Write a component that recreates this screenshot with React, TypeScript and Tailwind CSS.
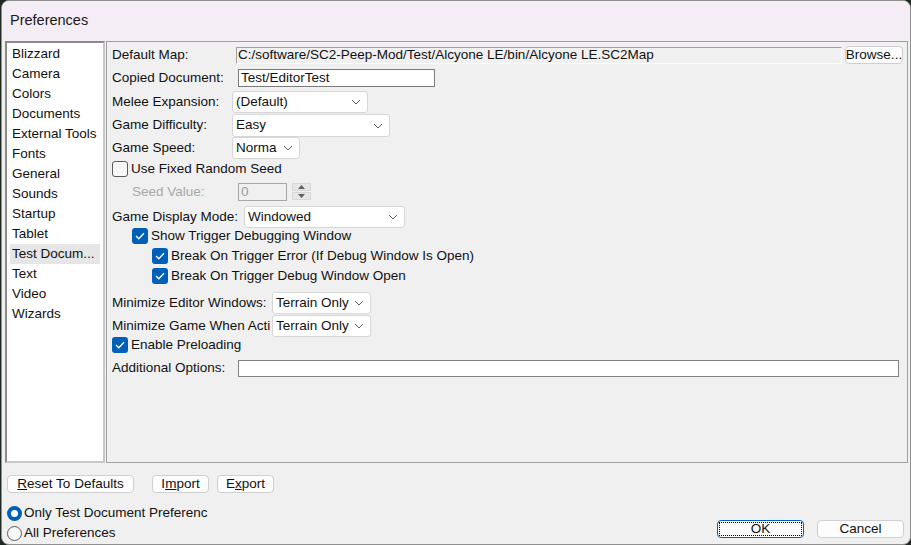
import React from 'react';

const categories = [
    'Blizzard', 'Camera', 'Colors', 'Documents', 'External Tools', 'Fonts', 'General',
    'Sounds', 'Startup', 'Tablet', 'Test Docum...', 'Text', 'Video', 'Wizards',
];

const Chevron = () => (
    <svg width="10" height="6" viewBox="0 0 10 6" className="shrink-0">
        <polyline points="1,1 5,5 9,1" fill="none" stroke="#606060" strokeWidth="1" />
    </svg>
);

const Dropdown: React.FC<{ value: string; w: string; h?: string }> = ({ value, w, h = 'h-[22px]' }) => (
    <div className={`${w} ${h} flex items-center justify-between pl-[3px] pr-[6px] bg-white border border-[#d6d6d6] rounded-[3px]`}>
        <span className="whitespace-nowrap overflow-hidden">{value}</span>
        <Chevron />
    </div>
);

const Check: React.FC<{ checked?: boolean; label: string }> = ({ checked, label }) => (
    <div className="flex items-center h-[16px] gap-[3px]">
        {checked ? (
            <div className="w-[16px] h-[16px] rounded-[3px] bg-[#005fb8] flex items-center justify-center">
                <svg width="10" height="8" viewBox="0 0 10 8">
                    <polyline points="1,4 3.8,6.8 9,1.2" fill="none" stroke="white" strokeWidth="1.3" />
                </svg>
            </div>
        ) : (
            <div className="w-[16px] h-[16px] rounded-[3px] border border-[#5a5a5a] bg-[#f7f7f7]" />
        )}
        <span className="whitespace-nowrap">{label}</span>
    </div>
);

const Radio: React.FC<{ checked?: boolean; label: string }> = ({ checked, label }) => (
    <div className="flex items-center h-[16px] gap-[2px]">
        {checked ? (
            <div className="w-[15px] h-[15px] rounded-full bg-[#005fb8] flex items-center justify-center">
                <div className="w-[7px] h-[7px] rounded-full bg-white" />
            </div>
        ) : (
            <div className="w-[15px] h-[15px] rounded-full border border-[#5a5a5a] bg-[#f7f7f7]" />
        )}
        <span className="whitespace-nowrap">{label}</span>
    </div>
);

const Btn: React.FC<{ w: string; children: React.ReactNode; focused?: boolean }> = ({ w, children, focused }) => (
    <div
        className={`${w} h-[18px] flex items-center justify-center rounded-[4px] bg-[#fdfdfd] border ${
            focused ? 'border-[#005fb8]' : 'border-[#d0d0d0]'
        }`}
    >
        {focused ? (
            <div className="w-[calc(100%-2px)] h-[14px] border border-dotted border-black flex items-center justify-center">
                {children}
            </div>
        ) : (
            children
        )}
    </div>
);

export default function App() {
    return (
        <div
            className="w-[911px] h-[545px] bg-[#1d2a22] text-[13.5px] text-[#111] overflow-hidden"
            style={{ fontFamily: '"Liberation Sans", Arial, sans-serif' }}
        >
            <div className="w-[910px] h-[545px] ml-[1px] rounded-[8px] border border-[#8f8f8f] bg-[#f0f0f0] flex flex-col overflow-hidden">
                {/* Title bar */}
                <div className="h-[39px] bg-[#f5edf5] flex items-center pl-[8px] pt-[1px] shrink-0">
                    <span className="text-[14.5px] text-[#1a1a1a]">Preferences</span>
                </div>

                {/* Main area */}
                <div className="flex h-[422px] mt-[1px] pl-[3px] pr-[2px] gap-[1px]">
                    {/* Category list */}
                    <div className="w-[100px] h-full bg-white border-2 border-t-[#8a8a8a] border-l-[#8a8a8a] border-r-[#c8c8c8] border-b-[#c8c8c8] pt-[1px] pl-[3px]">
                        {categories.map((c) => (
                            <div
                                key={c}
                                className={`h-[20px] w-[90px] flex items-center pl-[2px] whitespace-nowrap ${
                                    c === 'Test Docum...' ? 'bg-[#e6e6e6]' : ''
                                }`}
                            >
                                {c}
                            </div>
                        ))}
                    </div>

                    {/* Settings panel */}
                    <div className="flex-1 h-full border border-[#a0a0a0] pl-[5px] flex flex-col">
                        <div className="flex items-center h-[18px] mt-[4px]">
                            <span className="w-[124px] shrink-0">Default Map:</span>
                            <div className="w-[606px] h-[17px] flex items-center pl-[1px] bg-[#f0f0f0] border border-t-[#a0a0a0] border-l-[#a0a0a0] border-r-white border-b-white whitespace-nowrap overflow-hidden">
                                C:/software/SC2-Peep-Mod/Test/Alcyone LE/bin/Alcyone LE.SC2Map
                            </div>
                            <div className="ml-[3px]">
                                <Btn w="w-[58px]">Browse...</Btn>
                            </div>
                        </div>

                        <div className="flex items-center h-[18px] mt-[5px]">
                            <span className="w-[126px] shrink-0">Copied Document:</span>
                            <div className="w-[197px] h-[18px] flex items-center pl-[2px] bg-white border border-[#7a7a7a]">
                                Test/EditorTest
                            </div>
                        </div>

                        <div className="flex items-center h-[22px] mt-[4px]">
                            <span className="w-[120px] shrink-0">Melee Expansion:</span>
                            <Dropdown value="(Default)" w="w-[136px]" />
                        </div>

                        <div className="flex items-center h-[23px] mt-[1px]">
                            <span className="w-[120px] shrink-0">Game Difficulty:</span>
                            <Dropdown value="Easy" w="w-[158px]" h="h-[23px]" />
                        </div>

                        <div className="flex items-center h-[22px]">
                            <span className="w-[120px] shrink-0">Game Speed:</span>
                            <Dropdown value="Norma" w="w-[68px]" />
                        </div>

                        <div className="flex items-center h-[16px] mt-[2px]">
                            <Check label="Use Fixed Random Seed" />
                        </div>

                        <div className="flex items-center h-[18px] mt-[6px] pl-[20px]">
                            <span className="w-[106px] shrink-0 text-[#a8a8a8]">Seed Value:</span>
                            <div className="w-[49px] h-[18px] flex items-center pl-[2px] bg-[#f0f0f0] border border-[#a8a8a8] text-[#9a9a9a]">
                                0
                            </div>
                            <div className="ml-[5px] w-[19px] h-[18px] flex flex-col gap-[1px]">
                                <div className="h-[8px] bg-[#e6e6e6] border border-[#d8d8d8] flex items-center justify-center">
                                    <svg width="7" height="4" viewBox="0 0 7 4"><polygon points="0,4 3.5,0 7,4" fill="#606060" /></svg>
                                </div>
                                <div className="h-[8px] bg-[#e6e6e6] border border-[#d8d8d8] flex items-center justify-center">
                                    <svg width="7" height="4" viewBox="0 0 7 4"><polygon points="0,0 3.5,4 7,0" fill="#606060" /></svg>
                                </div>
                            </div>
                        </div>

                        <div className="flex items-center h-[22px] mt-[5px]">
                            <span className="w-[132px] shrink-0">Game Display Mode:</span>
                            <Dropdown value="Windowed" w="w-[161px]" />
                        </div>

                        <div className="pl-[20px] mt-[0px]">
                            <Check checked label="Show Trigger Debugging Window" />
                        </div>
                        <div className="pl-[40px] mt-[4px]">
                            <Check checked label="Break On Trigger Error (If Debug Window Is Open)" />
                        </div>
                        <div className="pl-[40px] mt-[4px]">
                            <Check checked label="Break On Trigger Debug Window Open" />
                        </div>

                        <div className="flex items-center h-[22px] mt-[8px]">
                            <span className="w-[160px] shrink-0 whitespace-nowrap">Minimize Editor Windows:</span>
                            <Dropdown value="Terrain Only" w="w-[99px]" />
                        </div>
                        <div className="flex items-center h-[22px] mt-[1px]">
                            <span className="w-[160px] shrink-0 whitespace-nowrap">Minimize Game When Acti</span>
                            <Dropdown value="Terrain Only" w="w-[99px]" />
                        </div>

                        <div className="mt-[0px]">
                            <Check checked label="Enable Preloading" />
                        </div>

                        <div className="flex items-center h-[17px] mt-[7px]">
                            <span className="w-[126px] shrink-0">Additional Options:</span>
                            <div className="w-[661px] h-[17px] bg-white border border-[#828282]" />
                        </div>
                    </div>
                </div>

                {/* Bottom area */}
                <div className="flex-1 flex pl-[5px] pr-[6px]">
                    <div className="flex flex-col">
                        <div className="flex items-center mt-[12px] gap-[8px]">
                            <Btn w="w-[127px]">
                                <span><u>R</u>eset To Defaults</span>
                            </Btn>
                            <div className="ml-[10px]">
                                <Btn w="w-[57px]">
                                    <span>I<u>m</u>port</span>
                                </Btn>
                            </div>
                            <Btn w="w-[57px]">
                                <span>E<u>x</u>port</span>
                            </Btn>
                        </div>
                        <div className="mt-[12px] flex flex-col gap-[4px]">
                            <Radio checked label="Only Test Document Preferenc" />
                            <Radio label="All Preferences" />
                        </div>
                    </div>
                    <div className="flex-1 flex items-end justify-end gap-[13px] pb-[6px]">
                        <Btn w="w-[87px]" focused>OK</Btn>
                        <Btn w="w-[87px]">Cancel</Btn>
                    </div>
                </div>
            </div>
        </div>
    );
}
